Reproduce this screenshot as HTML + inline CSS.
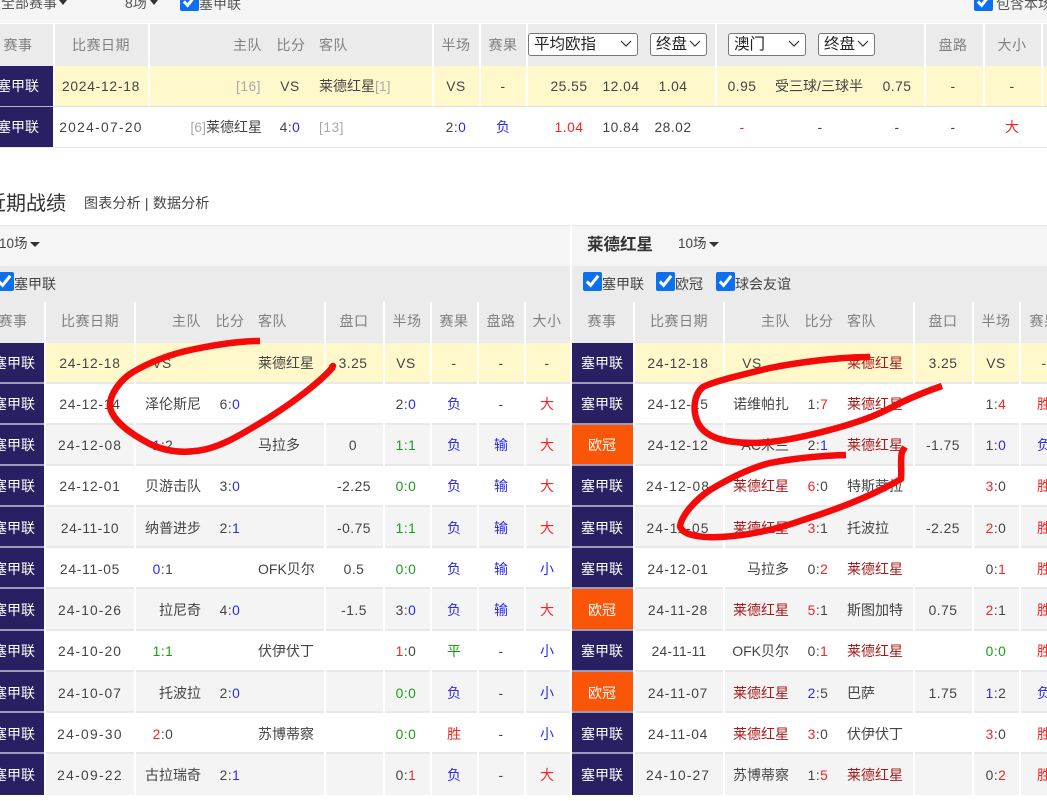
<!DOCTYPE html>
<html><head><meta charset="utf-8">
<style>
html,body{margin:0;padding:0;background:#fff}
body{width:1047px;height:801px;overflow:hidden;position:relative;font:14px "Liberation Sans","Noto Sans CJK SC",sans-serif;color:#444;filter:blur(.25px)}
.a{position:absolute}
p{position:absolute;margin:0;white-space:nowrap;line-height:20px;font-size:13.8px;letter-spacing:.5px;transform:translateY(-50%)}
p.c{transform:translate(-50%,-50%)}
p.r{transform:translate(-100%,-50%)}
p.h{color:#808080}
p.w{color:#fff;z-index:3;letter-spacing:0}
p.k{color:#a81a1a;letter-spacing:0}
p.n{letter-spacing:0}
p.n,p.w,p.k,p.h{font-size:14px;margin-top:1px}
p.d0{letter-spacing:.2px}p.d7{letter-spacing:.75px}p.d1{letter-spacing:1.1px}p.d3{letter-spacing:1.3px}
.u{color:#2a2af0}.e{color:#f52525}.g{color:#17a017}.q{color:#aaa}
p.u{color:#2a2af0}p.e{color:#f52525}p.g{color:#17a017}
.s{box-sizing:border-box;position:absolute;height:23px;top:33px;border:1px solid #777;border-radius:3px;background:#fff;color:#222;font-size:15.5px;line-height:21px;padding-left:5px;z-index:2}
.s svg{position:absolute;right:5px;top:6px}
input{position:absolute;margin:0;width:19px;height:19px;accent-color:#0b6ff0;z-index:2}
.v{position:absolute;top:302px;width:2px;height:493px;background:#fff}
.t{position:absolute;top:24px;width:2px;height:82px;background:#fff}
.lr{position:absolute;left:0;width:570px;height:39px;border-bottom:2px solid #e8e8e8}
.rr{position:absolute;left:572px;width:475px;height:39px;border-bottom:2px solid #e8e8e8}
.y{background:#fff8cb}.f{background:#fff}.o{background:#f4f4f4}
.m{position:absolute;height:2px;background:rgba(255,255,255,.55);z-index:2}
</style></head><body>
<!-- backgrounds -->
<div class="a" style="left:0;top:0;width:1047px;height:23px;background:#f5f5f5"></div>
<div class="a" style="left:0;top:24px;width:1047px;height:42px;background:#ebebeb"></div>
<div class="a" style="left:0;top:66px;width:1047px;height:40px;background:#fff8cb;border-bottom:1px solid #e0e0e0"></div>
<div class="a" style="left:0;top:107px;width:1047px;height:40px;background:#fff;border-bottom:1px solid #e6e6e6"></div>
<div class="a" style="left:0;top:66px;width:53px;height:81px;background:#291f63"></div>
<div class="a" style="left:0;top:106px;width:53px;height:1px;background:#b5b4c8"></div>
<div class="t" style="left:53px"></div>
<div class="t" style="left:148px"></div>
<div class="t" style="left:432px"></div>
<div class="t" style="left:479px"></div>
<div class="t" style="left:526px"></div>
<div class="t" style="left:715px"></div>
<div class="t" style="left:924px"></div>
<div class="t" style="left:983px"></div>
<div class="t" style="left:1041px"></div>

<div class="a" style="left:0;top:225px;width:570px;height:41px;background:#f5f5f5;border-top:1px solid #e6e6e6;box-sizing:border-box"></div>
<div class="a" style="left:572px;top:225px;width:475px;height:41px;background:#f5f5f5;border-top:1px solid #e6e6e6;box-sizing:border-box"></div>
<div class="a" style="left:0;top:266px;width:570px;height:36px;background:#ebebeb"></div>
<div class="a" style="left:572px;top:266px;width:475px;height:36px;background:#ebebeb"></div>
<div class="a" style="left:0;top:302px;width:570px;height:41px;background:#ebebeb"></div>
<div class="a" style="left:572px;top:302px;width:475px;height:41px;background:#ebebeb"></div>

<!-- rows L -->
<div class="lr y" style="top:343px"></div>
<div class="lr f" style="top:384px"></div>
<div class="lr o" style="top:425px"></div>
<div class="lr f" style="top:466px"></div>
<div class="lr o" style="top:507px"></div>
<div class="lr f" style="top:548px"></div>
<div class="lr o" style="top:589px;height:40px"></div>
<div class="lr f" style="top:631px"></div>
<div class="lr o" style="top:672px"></div>
<div class="lr f" style="top:713px"></div>
<div class="lr o" style="top:754px;height:41px;border:0"></div>
<!-- rows R -->
<div class="rr y" style="top:343px"></div>
<div class="rr f" style="top:384px"></div>
<div class="rr o" style="top:425px"></div>
<div class="rr f" style="top:466px"></div>
<div class="rr o" style="top:507px"></div>
<div class="rr f" style="top:548px"></div>
<div class="rr o" style="top:589px;height:40px"></div>
<div class="rr f" style="top:631px"></div>
<div class="rr o" style="top:672px"></div>
<div class="rr f" style="top:713px"></div>
<div class="rr o" style="top:754px;height:41px;border:0"></div>
<!-- column separators -->
<div class="v" style="left:44px"></div>
<div class="v" style="left:134px"></div>
<div class="v" style="left:324px"></div>
<div class="v" style="left:383px"></div>
<div class="v" style="left:430px"></div>
<div class="v" style="left:477px"></div>
<div class="v" style="left:524px"></div>
<div class="v" style="left:633px"></div>
<div class="v" style="left:723px"></div>
<div class="v" style="left:913px"></div>
<div class="v" style="left:972px"></div>
<div class="v" style="left:1019px"></div>
<!-- league blocks -->
<div class="a" style="left:0;top:343px;width:44px;height:452px;background:#291f63"></div>
<div class="a" style="left:572px;top:343px;width:61px;height:452px;background:#291f63"></div>
<div class="a" style="left:572px;top:425px;width:61px;height:39px;background:#fb5607"></div>
<div class="a" style="left:572px;top:589px;width:61px;height:40px;background:#fb5607"></div>
<div class="a" style="left:572px;top:672px;width:61px;height:39px;background:#fb5607"></div>
<div class="m" style="left:0;width:44px;top:382px"></div><div class="m" style="left:572px;width:61px;top:382px"></div>
<div class="m" style="left:0;width:44px;top:423px"></div><div class="m" style="left:572px;width:61px;top:423px"></div>
<div class="m" style="left:0;width:44px;top:464px"></div><div class="m" style="left:572px;width:61px;top:464px"></div>
<div class="m" style="left:0;width:44px;top:505px"></div><div class="m" style="left:572px;width:61px;top:505px"></div>
<div class="m" style="left:0;width:44px;top:546px"></div><div class="m" style="left:572px;width:61px;top:546px"></div>
<div class="m" style="left:0;width:44px;top:587px"></div><div class="m" style="left:572px;width:61px;top:587px"></div>
<div class="m" style="left:0;width:44px;top:629px"></div><div class="m" style="left:572px;width:61px;top:629px"></div>
<div class="m" style="left:0;width:44px;top:670px"></div><div class="m" style="left:572px;width:61px;top:670px"></div>
<div class="m" style="left:0;width:44px;top:711px"></div><div class="m" style="left:572px;width:61px;top:711px"></div>
<div class="m" style="left:0;width:44px;top:752px"></div><div class="m" style="left:572px;width:61px;top:752px"></div>

<!-- top bar -->
<p class="n" style="left:1px;top:2px;color:#555">全部赛事</p>
<div class="a" style="left:59px;top:0;border:4px solid transparent;border-top:5px solid #333"></div>
<p class="n" style="left:125px;top:2px;color:#555">8场</p>
<div class="a" style="left:150px;top:0;border:4px solid transparent;border-top:5px solid #333"></div>
<input type="checkbox" checked style="left:180px;top:-8px">
<p class="n" style="left:199px;top:3px;color:#555">塞甲联</p>
<input type="checkbox" checked style="left:974px;top:-8px">
<p class="n" style="left:996px;top:3px;color:#555">包含本场</p>

<!-- top header -->
<p class="c h" style="left:18px;top:44px">赛事</p>
<p class="c h" style="left:101px;top:44px">比赛日期</p>
<p class="r h" style="left:262px;top:44px">主队</p>
<p class="c h" style="left:291px;top:44px">比分</p>
<p class="h" style="left:319px;top:44px">客队</p>
<p class="c h" style="left:456px;top:44px">半场</p>
<p class="c h" style="left:503px;top:44px">赛果</p>
<div class="s" style="left:528px;width:110px">平均欧指<svg width="12" height="8" viewBox="0 0 12 8"><path d="M1 1l5 5 5-5" fill="none" stroke="#333" stroke-width="1.2"/></svg></div>
<div class="s" style="left:650px;width:57px">终盘<svg width="12" height="8" viewBox="0 0 12 8"><path d="M1 1l5 5 5-5" fill="none" stroke="#333" stroke-width="1.2"/></svg></div>
<div class="s" style="left:728px;width:78px">澳门<svg width="12" height="8" viewBox="0 0 12 8"><path d="M1 1l5 5 5-5" fill="none" stroke="#333" stroke-width="1.2"/></svg></div>
<div class="s" style="left:818px;width:57px">终盘<svg width="12" height="8" viewBox="0 0 12 8"><path d="M1 1l5 5 5-5" fill="none" stroke="#333" stroke-width="1.2"/></svg></div>
<p class="c h" style="left:953px;top:44px">盘路</p>
<p class="c h" style="left:1012px;top:44px">大小</p>

<!-- top rows -->
<p class="c w" style="left:18px;top:85px">塞甲联</p>
<p class="c d7" style="left:101px;top:87px">2024-12-18</p>
<p class="r q" style="left:261px;top:87px">[16]</p>
<p class="c" style="left:290px;top:87px">VS</p>
<p class="n" style="left:319px;top:85px">莱德红星<span class="q">[1]</span></p>
<p class="c" style="left:456px;top:87px">VS</p>
<p class="c" style="left:503px;top:87px">-</p>
<p class="c" style="left:569px;top:87px">25.55</p>
<p class="c" style="left:621px;top:87px">12.04</p>
<p class="c" style="left:673px;top:87px">1.04</p>
<p class="c" style="left:742px;top:87px">0.95</p>
<p class="c n" style="left:819px;top:85px">受三球/三球半</p>
<p class="c" style="left:897px;top:87px">0.75</p>
<p class="c" style="left:953px;top:87px">-</p>
<p class="c" style="left:1012px;top:87px">-</p>

<p class="c w" style="left:18px;top:126px">塞甲联</p>
<p class="c d3" style="left:101px;top:128px">2024-07-20</p>
<p class="r n" style="left:262px;top:126px"><span class="q">[6]</span>莱德红星</p>
<p class="c" style="left:290px;top:128px">4:<span class="u">0</span></p>
<p class="q" style="left:319px;top:128px">[13]</p>
<p class="c" style="left:456px;top:128px">2:<span class="u">0</span></p>
<p class="c u n" style="left:503px;top:126px">负</p>
<p class="c e" style="left:569px;top:128px">1.04</p>
<p class="c" style="left:621px;top:128px">10.84</p>
<p class="c" style="left:673px;top:128px">28.02</p>
<p class="c e" style="left:742px;top:128px">-</p>
<p class="c" style="left:820px;top:128px">-</p>
<p class="c" style="left:897px;top:128px">-</p>
<p class="c" style="left:953px;top:128px">-</p>
<p class="c e n" style="left:1012px;top:126px">大</p>

<!-- title -->
<p class="n" style="left:-14px;top:204px;font-size:20px;line-height:26px;color:#333;margin:0">近期战绩</p>
<p class="n" style="left:84px;top:202px;letter-spacing:.2px">图表分析 | 数据分析</p>

<!-- section headers -->
<p style="left:-1px;top:244px;letter-spacing:0;font-size:13.5px;color:#444">10场</p>
<div class="a" style="left:30px;top:242px;border:5px solid transparent;border-top:5px solid #333"></div>
<input type="checkbox" checked style="left:-5px;top:272px">
<p class="n" style="left:14px;top:283px">塞甲联</p>

<p class="n" style="left:587px;top:244px;font-size:16.5px;font-weight:bold;color:#333">莱德红星</p>
<p style="left:678px;top:244px;letter-spacing:0;font-size:13.5px">10场</p>
<div class="a" style="left:709px;top:242px;border:5px solid transparent;border-top:5px solid #333"></div>
<input type="checkbox" checked style="left:583px;top:272px">
<p class="n" style="left:602px;top:283px">塞甲联</p>
<input type="checkbox" checked style="left:656px;top:272px">
<p class="n" style="left:675px;top:283px">欧冠</p>
<input type="checkbox" checked style="left:716px;top:272px">
<p class="n" style="left:735px;top:283px">球会友谊</p>

<!-- table headers L -->
<p class="c h" style="left:13px;top:320px">赛事</p>
<p class="c h" style="left:90px;top:320px">比赛日期</p>
<p class="r h" style="left:201px;top:320px">主队</p>
<p class="c h" style="left:230px;top:320px">比分</p>
<p class="h" style="left:258px;top:320px">客队</p>
<p class="c h" style="left:354px;top:320px">盘口</p>
<p class="c h" style="left:407px;top:320px">半场</p>
<p class="c h" style="left:454px;top:320px">赛果</p>
<p class="c h" style="left:501px;top:320px">盘路</p>
<p class="c h" style="left:547px;top:320px">大小</p>
<!-- table headers R -->
<p class="c h" style="left:602px;top:320px">赛事</p>
<p class="c h" style="left:679px;top:320px">比赛日期</p>
<p class="r h" style="left:790px;top:320px">主队</p>
<p class="c h" style="left:819px;top:320px">比分</p>
<p class="h" style="left:847px;top:320px">客队</p>
<p class="c h" style="left:943px;top:320px">盘口</p>
<p class="c h" style="left:996px;top:320px">半场</p>
<p class="c h" style="left:1044px;top:320px">赛果</p>

<!-- L rows -->
<p class="c w" style="left:14px;top:362px">塞甲联</p><p class="c d7" style="left:90px;top:364px">24-12-18</p><p class="c" style="left:162px;top:364px">VS</p><p class="n" style="left:258px;top:362px">莱德红星</p><p class="c" style="left:353px;top:364px">3.25</p><p class="c" style="left:406px;top:364px">VS</p><p class="c" style="left:454px;top:364px">-</p><p class="c" style="left:501px;top:364px">-</p><p class="c" style="left:547px;top:364px">-</p>

<p class="c w" style="left:14px;top:403px">塞甲联</p><p class="c d7" style="left:90px;top:405px">24-12-14</p><p class="r n" style="left:201px;top:403px">泽伦斯尼</p><p class="c" style="left:230px;top:405px">6:<span class="u">0</span></p><p class="c" style="left:406px;top:405px">2:<span class="u">0</span></p><p class="c u n" style="left:454px;top:403px">负</p><p class="c" style="left:501px;top:405px">-</p><p class="c e n" style="left:547px;top:403px">大</p>

<p class="c w" style="left:14px;top:444px">塞甲联</p><p class="c d1" style="left:90px;top:446px">24-12-08</p><p class="c" style="left:163px;top:446px"><span class="u">1</span>:2</p><p class="n" style="left:258px;top:444px">马拉多</p><p class="c" style="left:353px;top:446px">0</p><p class="c g" style="left:406px;top:446px">1:1</p><p class="c u n" style="left:454px;top:444px">负</p><p class="c u n" style="left:501px;top:444px">输</p><p class="c e n" style="left:547px;top:444px">大</p>

<p class="c w" style="left:14px;top:485px">塞甲联</p><p class="c d7" style="left:90px;top:487px">24-12-01</p><p class="r n" style="left:201px;top:485px">贝游击队</p><p class="c" style="left:230px;top:487px">3:<span class="u">0</span></p><p class="c" style="left:354px;top:487px">-2.25</p><p class="c g" style="left:406px;top:487px">0:0</p><p class="c u n" style="left:454px;top:485px">负</p><p class="c u n" style="left:501px;top:485px">输</p><p class="c e n" style="left:547px;top:485px">大</p>

<p class="c w" style="left:14px;top:527px">塞甲联</p><p class="c" style="left:90px;top:529px">24-11-10</p><p class="r n" style="left:201px;top:527px">纳普进步</p><p class="c" style="left:230px;top:529px">2:<span class="u">1</span></p><p class="c" style="left:354px;top:529px">-0.75</p><p class="c g" style="left:406px;top:529px">1:1</p><p class="c u n" style="left:454px;top:527px">负</p><p class="c u n" style="left:501px;top:527px">输</p><p class="c e n" style="left:547px;top:527px">大</p>

<p class="c w" style="left:14px;top:568px">塞甲联</p><p class="c d7" style="left:90px;top:570px">24-11-05</p><p class="c" style="left:163px;top:570px"><span class="u">0</span>:1</p><p class="n" style="left:258px;top:568px">OFK贝尔</p><p class="c" style="left:354px;top:570px">0.5</p><p class="c g" style="left:406px;top:570px">0:0</p><p class="c u n" style="left:454px;top:568px">负</p><p class="c u n" style="left:501px;top:568px">输</p><p class="c u n" style="left:547px;top:568px">小</p>

<p class="c w" style="left:14px;top:609px">塞甲联</p><p class="c d1" style="left:90px;top:611px">24-10-26</p><p class="r n" style="left:201px;top:609px">拉尼奇</p><p class="c" style="left:230px;top:611px">4:<span class="u">0</span></p><p class="c" style="left:354px;top:611px">-1.5</p><p class="c" style="left:406px;top:611px">3:<span class="u">0</span></p><p class="c u n" style="left:454px;top:609px">负</p><p class="c u n" style="left:501px;top:609px">输</p><p class="c e n" style="left:547px;top:609px">大</p>

<p class="c w" style="left:14px;top:650px">塞甲联</p><p class="c d1" style="left:90px;top:652px">24-10-20</p><p class="c g" style="left:163px;top:652px">1:1</p><p class="n" style="left:258px;top:650px">伏伊伏丁</p><p class="c" style="left:406px;top:652px"><span class="e">1</span>:0</p><p class="c g n" style="left:454px;top:650px">平</p><p class="c" style="left:501px;top:652px">-</p><p class="c u n" style="left:547px;top:650px">小</p>

<p class="c w" style="left:14px;top:692px">塞甲联</p><p class="c d1" style="left:90px;top:694px">24-10-07</p><p class="r n" style="left:201px;top:692px">托波拉</p><p class="c" style="left:230px;top:694px">2:<span class="u">0</span></p><p class="c g" style="left:406px;top:694px">0:0</p><p class="c u n" style="left:454px;top:692px">负</p><p class="c" style="left:501px;top:694px">-</p><p class="c u n" style="left:547px;top:692px">小</p>

<p class="c w" style="left:14px;top:733px">塞甲联</p><p class="c d3" style="left:90px;top:735px">24-09-30</p><p class="c" style="left:163px;top:735px"><span class="e">2</span>:0</p><p class="n" style="left:258px;top:733px">苏博蒂察</p><p class="c g" style="left:406px;top:735px">0:0</p><p class="c e n" style="left:454px;top:733px">胜</p><p class="c" style="left:501px;top:735px">-</p><p class="c u n" style="left:547px;top:733px">小</p>

<p class="c w" style="left:14px;top:774px">塞甲联</p><p class="c d3" style="left:90px;top:776px">24-09-22</p><p class="r n" style="left:201px;top:774px">古拉瑞奇</p><p class="c" style="left:230px;top:776px">2:<span class="u">1</span></p><p class="c" style="left:406px;top:776px">0:<span class="e">1</span></p><p class="c u n" style="left:454px;top:774px">负</p><p class="c" style="left:501px;top:776px">-</p><p class="c e n" style="left:547px;top:774px">大</p>

<!-- R rows -->
<p class="c w" style="left:602px;top:362px">塞甲联</p><p class="c d7" style="left:678px;top:364px">24-12-18</p><p class="c" style="left:752px;top:364px">VS</p><p class="k" style="left:847px;top:362px">莱德红星</p><p class="c" style="left:943px;top:364px">3.25</p><p class="c" style="left:996px;top:364px">VS</p><p class="c" style="left:1044px;top:364px">-</p>

<p class="c w" style="left:602px;top:403px">塞甲联</p><p class="c d7" style="left:678px;top:405px">24-12-15</p><p class="r n" style="left:789px;top:403px">诺维帕扎</p><p class="c" style="left:818px;top:405px">1:<span class="e">7</span></p><p class="k" style="left:847px;top:403px">莱德红星</p><p class="c" style="left:996px;top:405px">1:<span class="e">4</span></p><p class="c e n" style="left:1044px;top:403px">胜</p>

<p class="c w" style="left:602px;top:444px">欧冠</p><p class="c d7" style="left:678px;top:446px">24-12-12</p><p class="r n" style="left:789px;top:444px">AC米兰</p><p class="c" style="left:818px;top:446px">2:<span class="u">1</span></p><p class="k" style="left:847px;top:444px">莱德红星</p><p class="c" style="left:943px;top:446px">-1.75</p><p class="c" style="left:996px;top:446px">1:<span class="u">0</span></p><p class="c u n" style="left:1044px;top:444px">负</p>

<p class="c w" style="left:602px;top:485px">塞甲联</p><p class="c d1" style="left:678px;top:487px">24-12-08</p><p class="r k" style="left:789px;top:485px">莱德红星</p><p class="c" style="left:818px;top:487px"><span class="e">6</span>:0</p><p class="n" style="left:847px;top:485px">特斯蒂拉</p><p class="c" style="left:996px;top:487px"><span class="e">3</span>:0</p><p class="c e n" style="left:1044px;top:485px">胜</p>

<p class="c w" style="left:602px;top:527px">塞甲联</p><p class="c d1" style="left:678px;top:529px">24-11-05</p><p class="r k" style="left:789px;top:527px">莱德红星</p><p class="c" style="left:818px;top:529px"><span class="e">3</span>:1</p><p class="n" style="left:847px;top:527px">托波拉</p><p class="c" style="left:943px;top:529px">-2.25</p><p class="c" style="left:996px;top:529px"><span class="e">2</span>:0</p><p class="c e n" style="left:1044px;top:527px">胜</p>

<p class="c w" style="left:602px;top:568px">塞甲联</p><p class="c d7" style="left:678px;top:570px">24-12-01</p><p class="r n" style="left:789px;top:568px">马拉多</p><p class="c" style="left:818px;top:570px">0:<span class="e">2</span></p><p class="k" style="left:847px;top:568px">莱德红星</p><p class="c" style="left:996px;top:570px">0:<span class="e">1</span></p><p class="c e n" style="left:1044px;top:568px">胜</p>

<p class="c w" style="left:602px;top:609px">欧冠</p><p class="c d7" style="left:678px;top:611px">24-11-28</p><p class="r k" style="left:789px;top:609px">莱德红星</p><p class="c" style="left:818px;top:611px"><span class="e">5</span>:1</p><p class="n" style="left:847px;top:609px">斯图加特</p><p class="c" style="left:943px;top:611px">0.75</p><p class="c" style="left:996px;top:611px"><span class="e">2</span>:1</p><p class="c e n" style="left:1044px;top:609px">胜</p>

<p class="c w" style="left:602px;top:650px">塞甲联</p><p class="c d0" style="left:679px;top:652px">24-11-11</p><p class="r n" style="left:789px;top:650px">OFK贝尔</p><p class="c" style="left:818px;top:652px">0:<span class="e">1</span></p><p class="k" style="left:847px;top:650px">莱德红星</p><p class="c g" style="left:996px;top:652px">0:0</p><p class="c e n" style="left:1044px;top:650px">胜</p>

<p class="c w" style="left:602px;top:692px">欧冠</p><p class="c d7" style="left:678px;top:694px">24-11-07</p><p class="r k" style="left:789px;top:692px">莱德红星</p><p class="c" style="left:818px;top:694px"><span class="u">2</span>:5</p><p class="n" style="left:847px;top:692px">巴萨</p><p class="c" style="left:943px;top:694px">1.75</p><p class="c" style="left:996px;top:694px"><span class="u">1</span>:2</p><p class="c u n" style="left:1044px;top:692px">负</p>

<p class="c w" style="left:602px;top:733px">塞甲联</p><p class="c d7" style="left:678px;top:735px">24-11-04</p><p class="r k" style="left:789px;top:733px">莱德红星</p><p class="c" style="left:818px;top:735px"><span class="e">3</span>:0</p><p class="n" style="left:847px;top:733px">伏伊伏丁</p><p class="c" style="left:996px;top:735px"><span class="e">3</span>:0</p><p class="c e n" style="left:1044px;top:733px">胜</p>

<p class="c w" style="left:602px;top:774px">塞甲联</p><p class="c d1" style="left:678px;top:776px">24-10-27</p><p class="r n" style="left:789px;top:774px">苏博蒂察</p><p class="c" style="left:818px;top:776px">1:<span class="e">5</span></p><p class="k" style="left:847px;top:774px">莱德红星</p><p class="c" style="left:996px;top:776px">0:<span class="e">2</span></p><p class="c e n" style="left:1044px;top:774px">胜</p>

<!-- hand-drawn strokes -->
<svg class="a" style="left:0;top:0;z-index:5" width="1047" height="801" viewBox="0 0 1047 801">
<g fill="none" stroke="#f50a0a" stroke-width="6.5" stroke-linejoin="round">
<path stroke-linecap="butt" d="M260 341 C240 341 215 345 195 349 C170 354 150 362 133 372 C120 380 109 395 110 407 C112 418 125 431 150 444 C165 451 180 453 195 451 C220 449 245 432 270 417 C295 401 320 382 333 367"/>
<path stroke-linecap="round" d="M332 367 L333 366"/>
<path stroke-linecap="butt" d="M870 357 C840 357 800 362 770 368 C745 374 715 381 703 387 C694 394 692 410 698 423 C703 433 715 440 735 442 C760 445 790 441 837 428 C865 420 880 414 900 403 C915 396 930 390 942 386"/>
<path stroke-linecap="butt" d="M846 455 C815 456 790 459 770 463 C750 468 730 478 710 490 C695 500 682 515 680 526 C682 535 700 538 720 537 C745 536 775 530 803 520 C835 510 870 497 901 479 C902 470 900 460 902 452 L905 447"/>
</g></svg>
</body></html>
